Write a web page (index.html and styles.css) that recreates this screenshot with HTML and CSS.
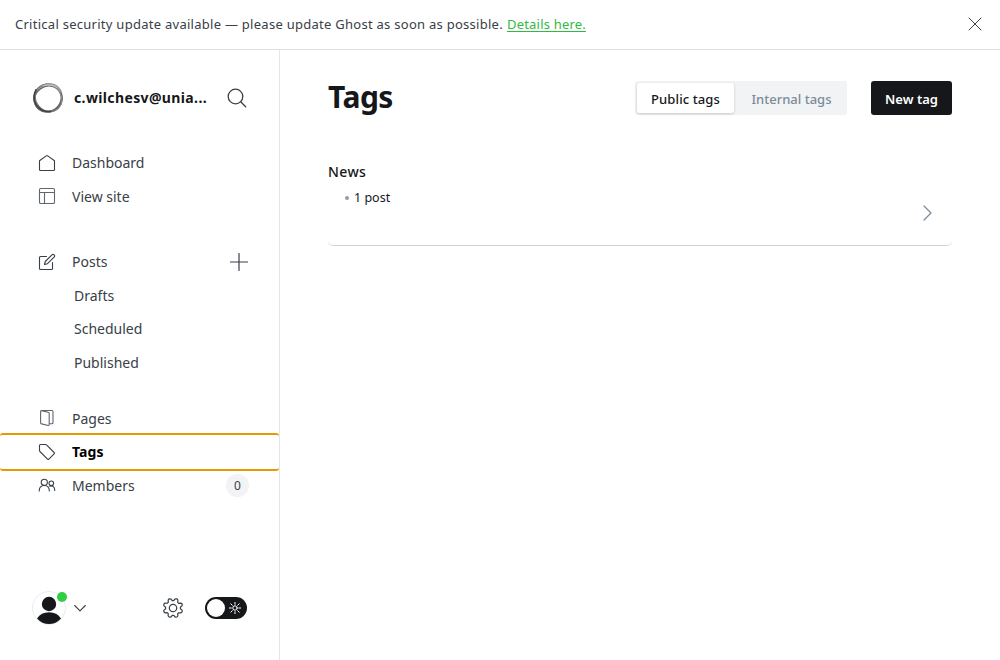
FILE: index.html
```html
<!DOCTYPE html>
<html lang="en">
<head>
<meta charset="utf-8">
<title>Tags</title>
<link rel="stylesheet" href="styles.css">
</head>
<body>
<div class="banner">
  <p class="banner-text"><span class="banner-message">Critical security update available — please update Ghost as soon as possible.</span><a class="banner-link" href="#">Details here.</a></p>
  <svg class="close" width="14" height="14" viewBox="0 0 14 14"><path d="M1 1l12 12M13 1L1 13"/></svg>
</div>
<div class="app">
  <nav class="sidebar">
    <header class="site">
      <svg class="site-logo" width="32" height="32" viewBox="0 0 32 32">
        <ellipse cx="16" cy="16" rx="14" ry="13.7" stroke="#555" stroke-width="1.7"/>
        <ellipse cx="15.4" cy="16.6" rx="13.8" ry="12.6" stroke="#666" stroke-width="1.5" transform="rotate(-35 16 16)"/>
        <ellipse cx="16.4" cy="15.6" rx="14.2" ry="12.6" stroke="#888" stroke-width="1.2" transform="rotate(50 16 16)"/>
        <path d="M4 8Q0 16 4.500 23Q10 30.500 19 29.500" stroke="#444" stroke-width="1.700"/>
        <path d="M14 2.300Q24 1 28.500 9" stroke="#999" stroke-width="2.200"/>
        <path d="M11 3.800Q20 1.500 25 5.500" stroke="#ccc" stroke-width="1"/>
      </svg>
      <span class="site-name">c.wilchesv@unia...</span>
      <svg class="search" width="20" height="20" viewBox="0 0 20 20"><circle cx="8.500" cy="8.500" r="7.300"/><path d="M13.700 13.700l5 5"/></svg>
    </header>
    <ul class="nav">
      <li class="item"><svg class="icon" viewBox="0 0 18 18"><path d="M1.500 6.700L8.300 1.900a1.200 1.200 0 0 1 1.400 0l6.800 4.800v8.800a1 1 0 0 1-1 1h-13a1 1 0 0 1-1-1z"/></svg><span>Dashboard</span></li>
      <li class="item"><svg class="icon soft" viewBox="0 0 18 18"><rect x="1.500" y="1.500" width="15" height="15" rx="1.300"/><path d="M1.500 5.500h15M6.500 5.500v11"/></svg><span>View site</span></li>
    </ul>
    <ul class="nav nav-posts">
      <li class="item"><svg class="icon" viewBox="0 0 18 18"><path d="M8.500 3.500h-6a1 1 0 0 0-1 1v11a1 1 0 0 0 1 1h11a1 1 0 0 0 1-1V9.500"/><path d="M6.500 11.500l.8-3L13.900 1.900a1.500 1.500 0 0 1 2.200 2.200L9.500 10.700z"/></svg><span>Posts</span><svg class="plus" width="18" height="18" viewBox="0 0 18 18"><path d="M9 0.500v17M.5 9h17"/></svg></li>
      <li class="item sub"><span>Drafts</span></li>
      <li class="item sub"><span>Scheduled</span></li>
      <li class="item sub"><span>Published</span></li>
    </ul>
    <ul class="nav nav-content">
      <li class="item"><svg class="icon soft" viewBox="0 0 18 18"><path d="M3.300 1.600l6.900 1.600a1.200 1.200 0 0 1 1 1.200v11.400a.8.8 0 0 1-1 .7l-6.600-1.600a1.200 1.200 0 0 1-1-1.200V2.300a.8.8 0 0 1 .7-.8h10.400a1.300 1.300 0 0 1 1.300 1.300v10.700a1.300 1.300 0 0 1-1.300 1.300h-2.500"/></svg><span>Pages</span></li>
      <li class="item active"><svg class="icon" viewBox="0 0 18 18"><path d="M1.500 2.500a1 1 0 0 1 1-1h5a1.500 1.500 0 0 1 1 .4l7.600 7.600a1 1 0 0 1 0 1.400l-5.200 5.200a1 1 0 0 1-1.400 0L1.900 8.500a1.500 1.500 0 0 1-.4-1z"/></svg><span>Tags</span></li>
      <li class="item"><svg class="icon" viewBox="0 0 18 18"><circle cx="6.300" cy="6.300" r="3.100"/><path d="M1.200 15c0-3.800 2-5.500 5.100-5.500s5 1.700 5 5.500"/><circle cx="13.300" cy="7.300" r="2.300"/><path d="M11.800 10.200c2.800-1 5 .6 5 4.300"/></svg><span>Members</span><span class="count">0</span></li>
    </ul>
    <footer class="tools">
      <span class="avatar">
        <svg width="34" height="34" viewBox="0 0 34 34"><circle cx="17" cy="17" r="16.500" fill="#fff" stroke="#e9ebee"/><circle cx="17" cy="13" r="7.200" fill="#15171a"/><path d="M5 27.500Q9 21.300 17 21.300T29 27.500Q24 33 17 33T5 27.500z" fill="#15171a"/></svg>
        <span class="status"></span>
      </span>
      <svg class="chevron-down" width="12" height="8" viewBox="0 0 12 8"><path d="M.7 1.500l5.300 5.300 5.300-5.300"/></svg>
      <svg class="gear" width="22" height="22" viewBox="0 0 22 22"><circle cx="11" cy="11" r="3.700"/><path d="M8.800 3.900L9.500 1.900Q11 .4 12.500 1.900L13.200 3.900L14.500 4.500L16.400 3.500Q18.500 3.500 18.500 5.600L17.500 7.500L18.100 8.800L20.100 9.500Q21.600 11 20.100 12.500L18.100 13.200L17.500 14.500L18.500 16.400Q18.500 18.500 16.400 18.500L14.500 17.500L13.200 18.100L12.500 20.100Q11 21.600 9.500 20.100L8.800 18.100L7.500 17.500L5.600 18.500Q3.500 18.500 3.500 16.400L4.500 14.500L3.900 13.200L1.900 12.500Q.4 11 1.900 9.500L3.900 8.800L4.500 7.500L3.500 5.600Q3.500 3.500 5.600 3.500L7.500 4.500z" transform="rotate(22.5 11 11)"/></svg>
      <span class="toggle">
        <span class="knob"></span>
        <svg width="12" height="12" viewBox="0 0 12 12"><circle cx="6" cy="6" r="2.200"/><path d="M6 0v2.300M6 9.700V12M0 6h2.300M9.700 6H12M1.800 1.800l1.500 1.500M8.700 8.700l1.500 1.500M10.200 1.800L8.700 3.300M3.300 8.700l-1.500 1.500"/></svg>
      </span>
    </footer>
  </nav>
  <main class="main">
    <header class="page-head">
      <h1 class="title">Tags</h1>
      <div class="segments">
        <span class="segment selected">Public tags</span>
        <span class="segment muted">Internal tags</span>
      </div>
      <button class="new-tag">New tag</button>
    </header>
    <section class="tag-row">
      <div class="tag-info">
        <h2 class="tag-name">News</h2>
        <p class="tag-meta"><span class="dot"></span><span class="post-count">1 post</span></p>
      </div>
      <svg class="chevron-right" width="10" height="16" viewBox="0 0 10 16"><path d="M1 1l7 7-7 7"/></svg>
    </section>
  </main>
</div>
</body>
</html>
```

FILE: styles.css
```css
* { box-sizing: border-box; }
body {
  margin: 0;
  height: 660px;
  display: flex;
  flex-direction: column;
  overflow: hidden;
  background: #fff;
  color: #15171a;
  font-family: "Segoe UI", "Noto Sans", "Open Sans", sans-serif;
}
h1, h2, p, ul { margin: 0; padding: 0; }
ul { list-style: none; }
svg { display: block; flex: none; fill: none; stroke: #394047; stroke-linecap: round; stroke-linejoin: round; }

.banner {
  height: 50px;
  flex: none;
  display: flex;
  align-items: center;
  justify-content: space-between;
  padding: 0 18px 1px 15px;
  border-bottom: 1px solid #dddfe1;
}
.banner-text { display: flex; gap: 4px; font-size: 13px; line-height: 20px; letter-spacing: .27px; color: #394047; white-space: nowrap; }
.banner-link { color: #30b943; letter-spacing: .2px; text-underline-offset: 2px; }
.close { stroke-width: 1; }

.app { flex: 1; display: flex; min-height: 0; }
.sidebar {
  width: 280px;
  flex: none;
  display: flex;
  flex-direction: column;
  border-right: 1px solid #e3e5e8;
}
.site { height: 96px; flex: none; display: flex; align-items: center; padding: 0 32px; }
.site-name { width: 136px; margin-left: 10px; padding-bottom: 2px; font-size: 14px; font-weight: 700; letter-spacing: .37px; white-space: nowrap; }
.search { margin-left: 18px; stroke-width: 1.300; }

.nav-posts { margin-top: 32px; }
.nav-content { margin-top: 22.500px; }
.item {
  height: 33.500px;
  display: flex;
  align-items: center;
  padding: 0 30px 0 38px;
  font-size: 14px;
  color: #394047;
  white-space: nowrap;
}
.icon { width: 18px; height: 18px; margin-right: 16px; stroke-width: 1.100; }
.soft { stroke: #5f666e; }
.sub { padding-left: 74px; }
.plus { margin-left: auto; margin-right: 1px; stroke-width: 1.200; }
.active {
  height: 37.500px;
  margin: -2px 0;
  border: solid #e69900;
  border-width: 2px 0;
  border-radius: 3px;
  color: #000;
  font-weight: 700;
  letter-spacing: .1px;
}
.count {
  width: 23px;
  height: 23px;
  margin-left: auto;
  border-radius: 50%;
  background: #f1f3f4;
  font-size: 12px;
  line-height: 24px;
  text-align: center;
}

.tools { margin-top: auto; height: 104px; display: flex; align-items: center; padding: 0 32px; }
.avatar { position: relative; }
.avatar svg { stroke: none; }
.status { position: absolute; top: 1px; right: -1px; width: 10px; height: 10px; border-radius: 50%; background: #30cf43; }
.chevron-down { margin-left: 8px; stroke-width: 1.100; }
.gear { margin-left: 76px; stroke-width: 1.200; }
.toggle {
  width: 42px;
  height: 22px;
  margin-left: auto;
  display: flex;
  align-items: center;
  justify-content: space-between;
  padding: 0 6px 0 2px;
  border-radius: 11px;
  background: #15171a;
}
.toggle svg { stroke: #fff; stroke-width: 1; }
.knob { width: 18px; height: 18px; border-radius: 50%; background: #fff; }

.main { flex: 1; padding: 0 48px; }
.page-head { height: 96px; display: flex; align-items: center; }
.title { margin-right: auto; padding-bottom: 2px; font-size: 30px; line-height: 36px; font-weight: 700; letter-spacing: -.5px; }
.segments { width: 212px; height: 34px; display: flex; padding: 2px; border-radius: 3px; background: #f1f3f4; }
.segment { height: 30px; font-size: 13px; font-weight: 500; line-height: 33px; text-align: center; white-space: nowrap; }
.selected { width: 97px; border-radius: 3px; background: #fff; box-shadow: 0 1px 3px rgba(0, 0, 0, .18); letter-spacing: .1px; }
.muted { flex: 1; padding-left: 4px; color: #7c8b9a; }
.new-tag {
  width: 81px;
  height: 34px;
  margin-left: 24px;
  padding: 2px 0 0;
  border: 0;
  border-radius: 3px;
  background: #15171a;
  color: #fff;
  font: 600 13px "Segoe UI", "Noto Sans", "Open Sans", sans-serif;
}
.tag-row {
  height: 100px;
  display: flex;
  justify-content: space-between;
  padding: 16px 19px 0 0;
  border-bottom: 1px solid #ced4d9;
  border-radius: 5px;
}
.tag-name { font-size: 14px; line-height: 20px; font-weight: 500; letter-spacing: .4px; }
.tag-meta { display: flex; align-items: center; gap: 5px; margin-top: 6px; padding-left: 17px; font-size: 12.500px; line-height: 20px; }
.dot { width: 4px; height: 4px; border-radius: 50%; background: #8e9cac; }
.chevron-right { margin-top: 43px; stroke: #7c8b9a; stroke-width: 1.300; }
```
